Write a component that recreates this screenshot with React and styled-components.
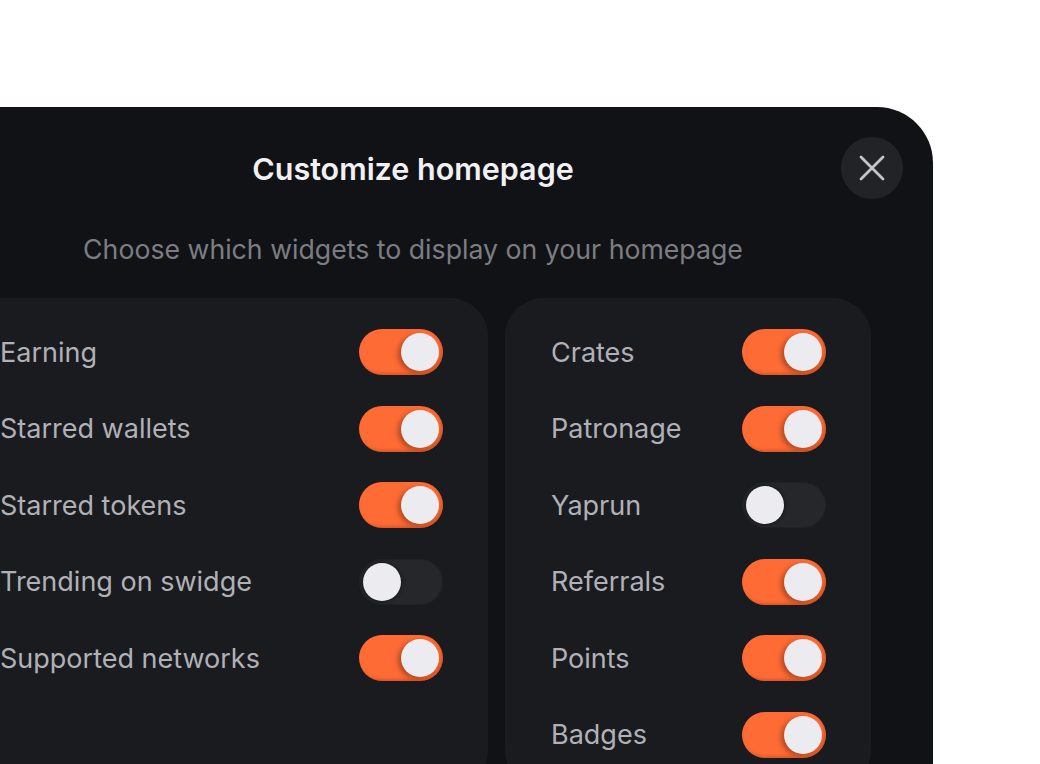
import React, { useState } from 'react';
import styled, { createGlobalStyle } from 'styled-components';

const GlobalStyle = createGlobalStyle`
  html, body {
    margin: 0;
    padding: 0;
    background: #ffffff;
    overflow: hidden;
  }
  body {
    font-family: Inter, "Noto Sans", sans-serif;
  }
`;

const Page = styled.div`
  width: 1040px;
  height: 764px;
  overflow: hidden;
  padding-top: 107px;
  box-sizing: border-box;
`;

const Modal = styled.div`
  position: relative;
  width: 1040px;
  margin-left: -107px;
  box-sizing: border-box;
  padding: 30px 61px 61px;
  background: #111215;
  border-radius: 56px;
`;

const Header = styled.div`
  display: flex;
  justify-content: center;
  align-items: center;
  height: 62px;
`;

const Title = styled.h2`
  margin: 0;
  font-size: 30.5px;
  font-weight: 600;
  color: #f1f1f3;
`;

const CloseButton = styled.button`
  position: absolute;
  top: 30px;
  right: 30px;
  width: 62px;
  height: 62px;
  border-radius: 50%;
  border: none;
  background: #222327;
  display: flex;
  align-items: center;
  justify-content: center;
  cursor: pointer;
  padding: 0;
`;

const Subtitle = styled.p`
  margin: 33px 0 32px;
  text-align: center;
  font-size: 26.7px;
  line-height: 34px;
  color: #7c7d84;
`;

const Columns = styled.div`
  display: grid;
  grid-template-columns: 534px 366px;
  gap: 17px;
`;

const Panel = styled.div`
  background: #1a1b1f;
  border-radius: 38px;
  padding: 31px 45px 31px 46px;
  display: flex;
  flex-direction: column;
  gap: 30.6px;
`;

const Row = styled.div`
  display: flex;
  align-items: center;
  justify-content: space-between;
  height: 46px;
`;

const Label = styled.span`
  font-size: 27px;
  color: #b0b1b7;
`;

const Track = styled.button`
  position: relative;
  width: 84px;
  height: 46px;
  border-radius: 23px;
  border: none;
  padding: 0;
  cursor: pointer;
  background: ${p => (p.$on ? '#ff6b35' : '#26272b')};
  box-shadow: ${p => (p.$on ? 'inset -2px -2px 3px rgba(150, 50, 10, 0.35)' : 'inset 0 0 0 1px #202125')};
`;

const Knob = styled.span`
  position: absolute;
  top: 4px;
  left: ${p => (p.$on ? '42px' : '4px')};
  width: 38px;
  height: 38px;
  border-radius: 50%;
  background: #ececf0;
  box-shadow: ${p => (p.$on ? '-3px 2px 5px rgba(90, 30, 5, 0.45)' : '0 0 4px rgba(0, 0, 0, 0.6)')};
`;

const leftItems = [
  { label: 'Earning', on: true },
  { label: 'Starred wallets', on: true },
  { label: 'Starred tokens', on: true },
  { label: 'Trending on swidge', on: false },
  { label: 'Supported networks', on: true },
];

const rightItems = [
  { label: 'Crates', on: true },
  { label: 'Patronage', on: true },
  { label: 'Yaprun', on: false },
  { label: 'Referrals', on: true },
  { label: 'Points', on: true },
  { label: 'Badges', on: true },
];

const Toggle = ({ initial }) => {
  const [on, setOn] = useState(initial);
  return (
    <Track $on={on} onClick={() => setOn(!on)}>
      <Knob $on={on} />
    </Track>
  );
};

const WidgetPanel = ({ items }) => (
  <Panel>
    {items.map(item => (
      <Row key={item.label}>
        <Label>{item.label}</Label>
        <Toggle initial={item.on} />
      </Row>
    ))}
  </Panel>
);

export default function App() {
  return (
    <Page>
      <GlobalStyle />
      <Modal>
        <Header>
          <Title>Customize homepage</Title>
        </Header>
        <CloseButton aria-label="Close">
          <svg width="28" height="28" viewBox="0 0 28 28" fill="none" stroke="#c4c5cb" strokeWidth="2.8" strokeLinecap="round">
            <path d="M3 3L25 25M25 3L3 25" />
          </svg>
        </CloseButton>
        <Subtitle>Choose which widgets to display on your homepage</Subtitle>
        <Columns>
          <WidgetPanel items={leftItems} />
          <WidgetPanel items={rightItems} />
        </Columns>
      </Modal>
    </Page>
  );
}
